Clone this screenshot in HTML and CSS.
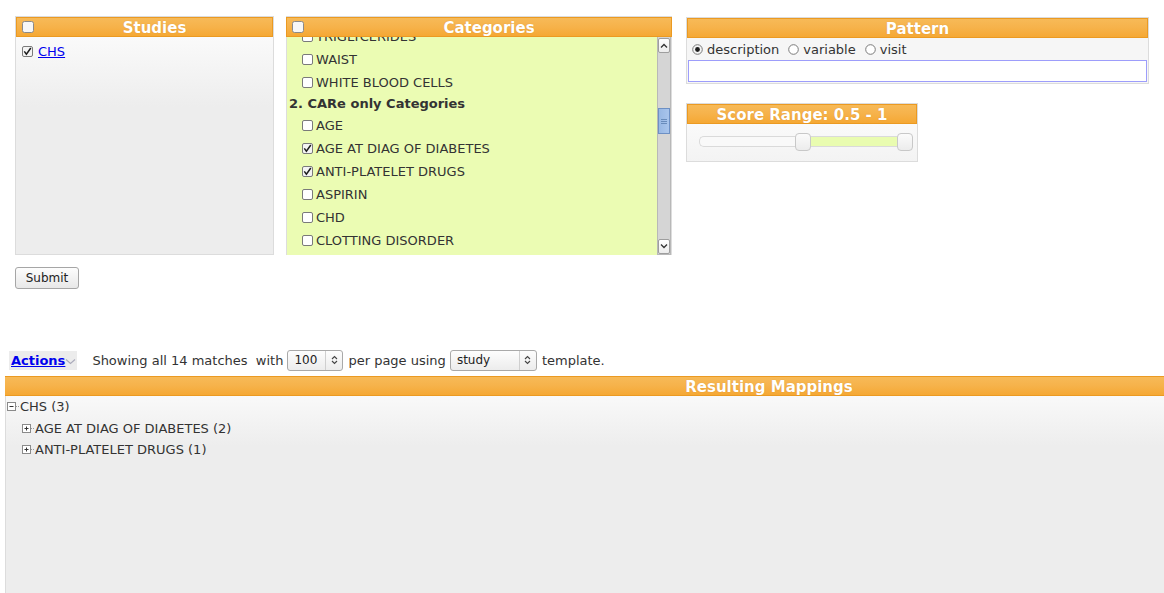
FILE: index.html
```html
<!DOCTYPE html>
<html>
<head>
<meta charset="utf-8">
<title>Mappings</title>
<link rel="stylesheet" href="styles.css">
</head>
<body>
<svg class="defs" width="0" height="0">
  <symbol id="cb" viewBox="0 0 11 11"><rect x="0.5" y="0.5" width="10" height="10" rx="1.5" fill="#fff" stroke="#7a7a7a"/></symbol>
  <symbol id="cbon" viewBox="0 0 11 11"><rect x="0.5" y="0.5" width="10" height="10" rx="1.5" fill="#f4f4f4" stroke="#7a7a7a"/><path d="M2.3 5.4 L4.4 8.2 L8.8 2" fill="none" stroke="#1e1e1e" stroke-width="1.5"/></symbol>
  <symbol id="hcb" viewBox="0 0 12 12"><rect x="0.5" y="0.5" width="11" height="11" rx="2" fill="#f7f7f7" stroke="#8a8a8a"/></symbol>
  <symbol id="rd" viewBox="0 0 11 11"><circle cx="5.5" cy="5.5" r="4.8" fill="#fff" stroke="#7a7a7a"/></symbol>
  <symbol id="rdon" viewBox="0 0 11 11"><circle cx="5.5" cy="5.5" r="4.8" fill="#f4f4f4" stroke="#7a7a7a"/><circle cx="5.5" cy="5.5" r="2.4" fill="#1e1e1e"/></symbol>
  <symbol id="minus" viewBox="0 0 13 9"><rect x="0.5" y="0.5" width="8" height="8" fill="#fff" stroke="#8a8a8a"/><path d="M2.5 4.5 H6.5" stroke="#333"/><path d="M9 4.5 H13" stroke="#999" stroke-dasharray="1 1"/></symbol>
  <symbol id="plus" viewBox="0 0 13 9"><rect x="0.5" y="0.5" width="8" height="8" fill="#fff" stroke="#8a8a8a"/><path d="M2.5 4.5 H6.5 M4.5 2.5 V6.5" stroke="#333"/><path d="M9 4.5 H13" stroke="#999" stroke-dasharray="1 1"/></symbol>
</svg>

<div class="top">
  <section class="panel studies">
    <div class="hd hd-cb"><svg class="hcb"><use href="#hcb"/></svg>Studies</div>
    <div class="bd grad">
      <div class="srow"><svg class="cb"><use href="#cbon"/></svg><a href="#" class="link">CHS</a></div>
    </div>
  </section>

  <section class="panel categories">
    <div class="hd hd-cb"><svg class="hcb"><use href="#hcb"/></svg>Categories</div>
    <div class="bd cat-bd">
      <div class="cat-list">
        <div class="cat-inner">
          <div class="item"><svg class="cb"><use href="#cb"/></svg>TRIGLYCERIDES</div>
          <div class="item"><svg class="cb"><use href="#cb"/></svg>WAIST</div>
          <div class="item"><svg class="cb"><use href="#cb"/></svg>WHITE BLOOD CELLS</div>
          <div class="group">2. CARe only Categories</div>
          <div class="item"><svg class="cb"><use href="#cb"/></svg>AGE</div>
          <div class="item"><svg class="cb"><use href="#cbon"/></svg>AGE AT DIAG OF DIABETES</div>
          <div class="item"><svg class="cb"><use href="#cbon"/></svg>ANTI-PLATELET DRUGS</div>
          <div class="item"><svg class="cb"><use href="#cb"/></svg>ASPIRIN</div>
          <div class="item"><svg class="cb"><use href="#cb"/></svg>CHD</div>
          <div class="item"><svg class="cb"><use href="#cb"/></svg>CLOTTING DISORDER</div>
          <div class="item"><svg class="cb"><use href="#cb"/></svg>DIABETES</div>
        </div>
      </div>
      <div class="sbar">
        <div class="sbtn"><svg width="8" height="5" viewBox="0 0 8 5"><path d="M1 4.5 L4 1.5 L7 4.5" fill="none" stroke="#333" stroke-width="1.3"/></svg></div>
        <div class="strack">
          <div class="sthumb"><svg width="6" height="7" viewBox="0 0 6 7"><path d="M0 1.5H6M0 3.5H6M0 5.5H6" stroke="#5a7fb0" stroke-width="0.8"/></svg></div>
        </div>
        <div class="sbtn"><svg width="8" height="5" viewBox="0 0 8 5"><path d="M1 0.5 L4 3.5 L7 0.5" fill="none" stroke="#333" stroke-width="1.3"/></svg></div>
      </div>
    </div>
  </section>

  <div class="rightcol">
    <section class="panel pattern">
      <div class="hd">Pattern</div>
      <div class="pbody">
        <div class="radios">
          <label class="radio"><svg class="rd"><use href="#rdon"/></svg>description</label>
          <label class="radio"><svg class="rd"><use href="#rd"/></svg>variable</label>
          <label class="radio"><svg class="rd"><use href="#rd"/></svg>visit</label>
        </div>
        <div class="textbox"></div>
      </div>
    </section>

    <section class="panel score">
      <div class="hd">Score Range: 0.5 - 1</div>
      <div class="bd grad score-bd">
        <div class="slider">
          <div class="sl-left"></div>
          <div class="handle"></div>
          <div class="sl-range"></div>
          <div class="handle"></div>
        </div>
      </div>
    </section>
  </div>
</div>

<button class="submit" type="button">Submit</button>

<div class="actions-row">
  <span class="actions"><a href="#" class="actlink">Actions</a><svg width="11" height="7" viewBox="0 0 11 7"><path d="M1 1.5 L5.5 5.5 L10 1.5" fill="none" stroke="#aab" stroke-width="1.1"/></svg></span>
  <span class="txt">Showing all 14 matches&nbsp; with</span>
  <span class="sel sel-num">100<span class="arr"><svg width="7" height="10" viewBox="0 0 7 10"><path d="M1 4 L3.5 1.5 L6 4 M1 6 L3.5 8.5 L6 6" fill="none" stroke="#444" stroke-width="1.1"/></svg></span></span>
  <span class="txt">per page using</span>
  <span class="sel sel-tpl">study<span class="arr"><svg width="7" height="10" viewBox="0 0 7 10"><path d="M1 4 L3.5 1.5 L6 4 M1 6 L3.5 8.5 L6 6" fill="none" stroke="#444" stroke-width="1.1"/></svg></span></span>
  <span class="txt">template.</span>
</div>

<section class="results">
  <div class="hd rhd">Resulting Mappings</div>
  <div class="rbody">
    <div class="tree">
      <div class="node root"><svg class="tg"><use href="#minus"/></svg>CHS (3)</div>
      <div class="children">
        <div class="node"><svg class="tg"><use href="#plus"/></svg>AGE AT DIAG OF DIABETES (2)</div>
        <div class="node"><svg class="tg"><use href="#plus"/></svg>ANTI-PLATELET DRUGS (1)</div>
      </div>
    </div>
  </div>
</section>
</body>
</html>
```

FILE: styles.css
```css
html, body {
  margin: 0;
  padding: 0;
  overflow: hidden;
  background: #fff;
}
body {
  font-family: "DejaVu Sans", sans-serif;
  font-size: 13px;
  color: #333;
}
.defs {
  position: absolute;
  width: 0;
  height: 0;
}

.top {
  display: flex;
  align-items: flex-start;
  padding: 16px 15px 0 15px;
}

.panel {
  border: 1px solid #dcdcdc;
  box-sizing: border-box;
}
.hd {
  position: relative;
  height: 20px;
  line-height: 20px;
  box-sizing: border-box;
  background: linear-gradient(to bottom, #f7ba58 0%, #f6b24a 50%, #f5a834 100%);
  border: 1px solid #eb9a22;
  color: #fff;
  font-weight: bold;
  font-size: 15px;
  text-align: center;
  text-shadow: 0 0 1px rgba(150, 80, 0, 0.35);
}
.hd-cb {
  padding-left: 20px;
}
.hcb {
  position: absolute;
  left: 5px;
  top: 3px;
  width: 12px;
  height: 12px;
}
.bd {
  height: 218px;
}
.grad {
  background: linear-gradient(to bottom, #fafafa 0px, #ededed 70px, #ededed 100%);
}

.studies {
  width: 259px;
}
.studies .bd {
  height: 217px;
}
.srow {
  display: flex;
  align-items: center;
  height: 28px;
  padding-left: 6px;
}
.cb {
  width: 11px;
  height: 11px;
  flex: none;
  margin-right: 3px;
}
.link {
  color: #0000ee;
  margin-left: 2px;
}

.categories {
  width: 386px;
  margin-left: 12px;
  border-bottom: none;
  border-color: #ddd;
}
.categories .hd {
  margin: 0 -1px;
}
.cat-bd {
  display: flex;
  height: 218px;
  background: #ebfcb3;
}
.cat-list {
  flex: 1;
  overflow: hidden;
}
.cat-inner {
  margin-top: -12px;
}
.item {
  display: flex;
  align-items: center;
  height: 23px;
  padding-left: 15px;
  white-space: nowrap;
}
.group {
  height: 20px;
  line-height: 19px;
  padding-left: 2px;
  font-weight: bold;
}

.sbar {
  width: 14px;
  display: flex;
  flex-direction: column;
  background: #d5d5d5;
  border: 1px solid #b8b8b8;
  border-top: none;
  box-sizing: border-box;
}
.sbtn {
  height: 13px;
  flex: none;
  display: flex;
  align-items: center;
  justify-content: center;
  background: linear-gradient(#fff, #ececec);
  border: 1px solid #9e9e9e;
  border-radius: 2px;
  margin: 1px 0 0 0;
}
.strack {
  flex: 1;
  padding-top: 55px;
}
.sthumb {
  height: 26px;
  background: linear-gradient(to right, #98b8e4, #a9c5ec);
  border: 1px solid #6d90c4;
  box-sizing: border-box;
  display: flex;
  align-items: center;
  justify-content: center;
}

.rightcol {
  width: 463px;
  margin-left: 14px;
  padding-top: 1px;
}
.pattern .pbody {
  background: #f6f6f6;
  padding: 0 0 1px 0;
}
.radios {
  display: flex;
  align-items: center;
  height: 21px;
  padding: 1px 0 0 5px;
  gap: 9px;
}
.radio {
  display: flex;
  align-items: center;
}
.rd {
  width: 11px;
  height: 11px;
  margin-right: 4px;
}
.textbox {
  height: 22px;
  box-sizing: border-box;
  background: #fff;
  border: 1px solid #9d9dfb;
  margin: 0 1px;
}

.score {
  width: 232px;
  margin-top: 19px;
}
.score-bd {
  height: 37px;
  padding: 8px 3px 0 12px;
  box-sizing: border-box;
}
.slider {
  display: flex;
  align-items: center;
  height: 19px;
}
.sl-left {
  width: 96px;
  height: 11px;
  box-sizing: border-box;
  background: #f9f9f9;
  border: 1px solid #dadada;
  border-right: none;
  border-radius: 5px 0 0 5px;
}
.sl-range {
  width: 86px;
  height: 11px;
  box-sizing: border-box;
  background: #e9fcb0;
  border-top: 1px solid #dadada;
  border-bottom: 1px solid #dadada;
}
.handle {
  width: 16px;
  height: 18px;
  box-sizing: border-box;
  border: 1px solid #c8c8c8;
  border-radius: 4px;
  background: linear-gradient(#fbfbfb, #ececec);
}

.submit {
  display: block;
  margin: 12px 0 0 15px;
  width: 64px;
  height: 22px;
  padding: 0;
  font-family: "DejaVu Sans", sans-serif;
  font-size: 12px;
  color: #222;
  background: linear-gradient(#fdfdfd, #e8e8e8);
  border: 1px solid #a6a6a6;
  border-radius: 3px;
}

.actions-row {
  display: flex;
  align-items: center;
  height: 22px;
  margin: 60px 0 0 9px;
  white-space: nowrap;
}
.actions {
  display: flex;
  align-items: center;
  height: 19px;
  padding: 0 1px 0 2px;
  background: #ececec;
  margin-right: 15px;
}
.actlink {
  color: #0000ee;
  font-weight: bold;
}
.actions svg {
  margin-top: 3px;
}
.txt {
  margin-right: 4px;
}
.sel {
  display: flex;
  align-items: center;
  justify-content: space-between;
  height: 21px;
  box-sizing: border-box;
  padding-left: 6px;
  border: 1px solid #a9a9a9;
  border-radius: 3px;
  background: linear-gradient(#fdfdfd, #ececec);
  font-size: 12px;
  color: #222;
  margin-right: 5px;
}
.sel-num {
  width: 56px;
}
.sel-tpl {
  width: 87px;
}
.arr {
  display: flex;
  align-items: center;
  justify-content: center;
  width: 16px;
  height: 100%;
  border-left: 1px solid #cfcfcf;
}

.results {
  width: 1528px;
  margin: 5px 0 0 5px;
}
.rhd {
  border-left: none;
  border-right: none;
}
.rbody {
  height: 240px;
  border-left: 1px solid #dcdcdc;
  background: linear-gradient(to bottom, #f9f9f9 0px, #ededed 50px, #ededed 100%);
}
.node {
  display: flex;
  align-items: center;
  height: 21.5px;
  white-space: nowrap;
}
.tg {
  width: 13px;
  height: 9px;
  flex: none;
}
.root {
  padding-left: 1px;
}
.children {
  padding-left: 16px;
}
```
